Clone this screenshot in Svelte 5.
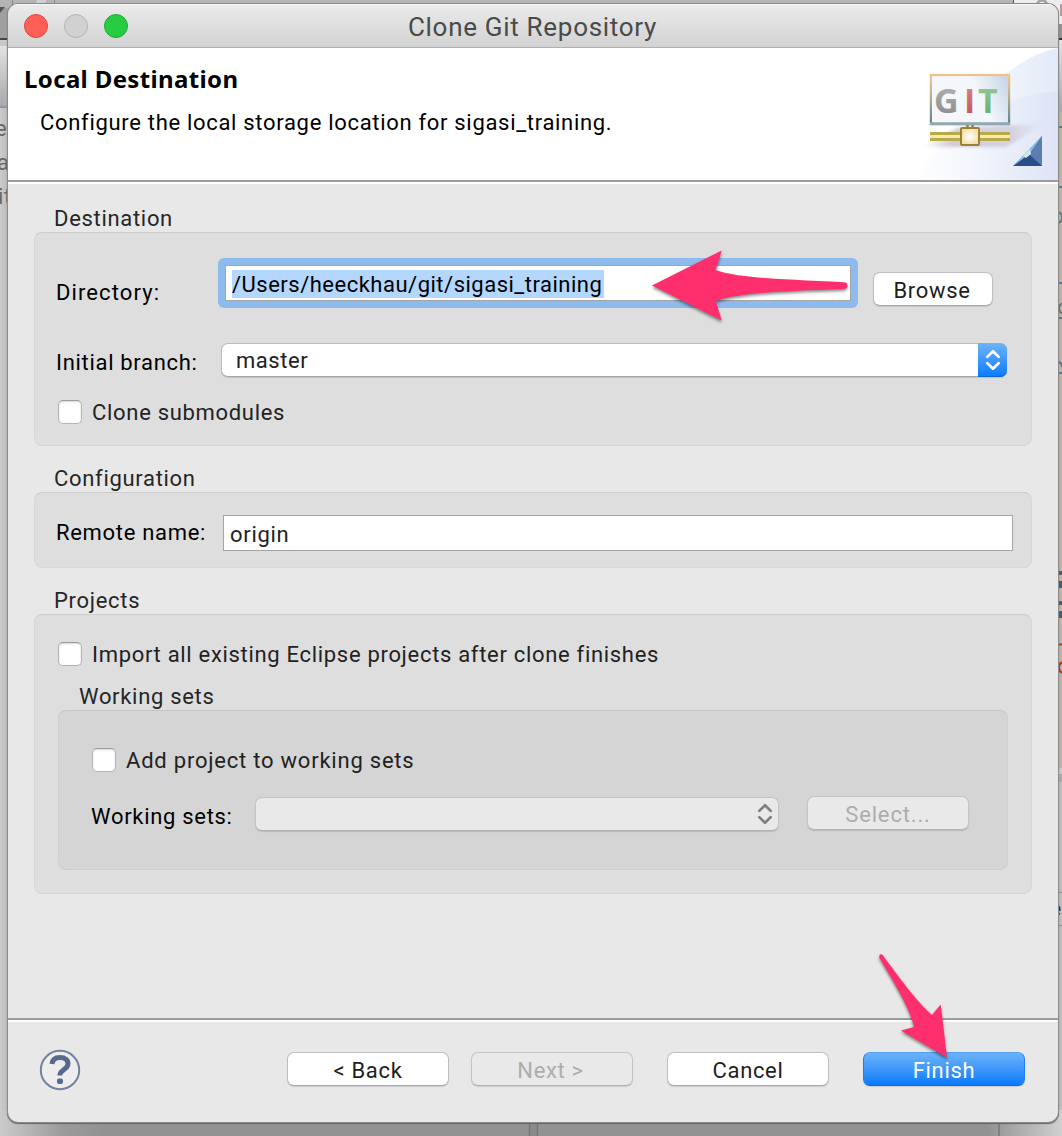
<script>
  let directory = $state('/Users/heeckhau/git/sigasi_training');
  let branch = $state('master');
  let remote = $state('origin');
</script>

{#snippet chevrons()}
  <svg class="chev" viewBox="0 0 16 24" aria-hidden="true">
    <path d="M2.300 8.900 8 3.200l5.700 5.700M2.300 15.100 8 20.800l5.700-5.700" />
  </svg>
{/snippet}

<div class="desktop">
  <!-- Slivers of the editor window behind the dialog -->
  <svg class="backdrop" viewBox="0 0 1062 1136" aria-hidden="true">
    <defs>
      <linearGradient id="bottomShade" x1="0" x2="1" y1="0" y2="0">
        <stop offset="0" stop-color="#cbcbcb" />
        <stop offset=".06" stop-color="#9a9a9a" />
        <stop offset=".1" stop-color="#929292" />
        <stop offset=".93" stop-color="#929292" />
        <stop offset="1" stop-color="#d0d0d0" />
      </linearGradient>
      <linearGradient id="toolbar" x1="0" x2="0" y1="0" y2="1">
        <stop offset="0" stop-color="#e2e2e2" />
        <stop offset="1" stop-color="#a8a8a8" />
      </linearGradient>
      <linearGradient id="leftFade" x1="0" x2="1" y1="0" y2="0">
        <stop offset="0" stop-color="#cbcbcb" />
        <stop offset="1" stop-color="#b4b4b4" />
      </linearGradient>
    </defs>
    <rect width="1062" height="1136" fill="#c4c4c4" />
    <rect width="1014" height="40" fill="#b4b4b4" />
    <rect y="8" width="12" height="31" fill="#a0a0a0" />
    <path d="M0 7h5L0 13z" fill="#555" />
    <path d="M12.500 0v5M54.500 0v5" stroke="#8a8a8a" />
    <path d="M37 0h10l-3 4h-8z" fill="#cfcfcf" />
    <rect y="38" width="12" height="2" fill="#484848" />
    <rect y="40" width="12" height="7" fill="#c8c8c8" />
    <rect y="46" width="12" height="61" fill="url(#toolbar)" />
    <rect y="106" width="12" height="2" fill="#9296ac" />
    <rect y="108" width="12" height="1028" fill="url(#leftFade)" />
    <g class="ghost">
      <text x="-5" y="136">e</text>
      <text x="-3" y="170">a</text>
      <text x="-2" y="204">it</text>
    </g>
    <rect x="1014" width="48" height="24" fill="#ededed" />
    <path d="M1013.500 0v5" stroke="#555" />
    <circle cx="1042" cy="6" r="5.500" fill="none" stroke="#aaa0a4" stroke-width="2.500" />
    <path d="M1061 4v12" stroke="#b09c9c" stroke-width="2" />
    <rect x="1050" y="24" width="12" height="14" fill="#929292" />
    <rect x="1050" y="38" width="12" height="2" fill="#333" />
    <rect x="1050" y="40" width="12" height="72" fill="url(#toolbar)" />
    <rect x="1050" y="112" width="12" height="656" fill="#bdb6a8" />
    <path d="M1056 127h6M1056 187h6" fill="none" stroke="#66767a" stroke-width="2" />
    <path d="M1056 212h2q4 1 4 5.500t-4 5.500M1056 283h6M1064 303q-5 1-5 5.500t5 5.500M1056 318h6M1056 362h3q3 1 3 5M1056 373h6" fill="none" stroke="#66767a" stroke-width="2" />
    <g fill="#4c5c64">
      <rect x="1058" y="571" width="4" height="4" /><rect x="1058" y="581" width="4" height="7" />
      <rect x="1058" y="601" width="4" height="4" /><rect x="1058" y="611" width="4" height="7" />
    </g>
    <path d="M1056 644.500h6M1064 662q-5 0-5 5.500t5 5.500" fill="none" stroke="#b23a18" stroke-width="2" />
    <rect x="1050" y="768" width="12" height="6" fill="#c8c8c8" />
    <rect x="1050" y="774" width="12" height="8" fill="#aaa" />
    <rect x="1050" y="782" width="12" height="354" fill="#bebebe" />
    <path d="M1050 892.500h12M1050 925.500h12" stroke="#8e8e8e" />
    <text x="1049" y="916" class="tail">e</text>
    <rect y="1110" width="1062" height="26" fill="url(#bottomShade)" />
    <rect x="529" y="1120" width="9" height="16" fill="#8a8a8a" />
    <path d="M529.500 1120v16M537.500 1120v16M999 1120v16" stroke="#777" stroke-width="1.500" />
  </svg>

  <section class="window">
    <header class="titlebar">
      <span class="light red"></span><span class="light gray"></span><span class="light green"></span>
      <h1>Clone Git Repository</h1>
    </header>

    <div class="banner">
      <div class="intro">
        <h2>Local Destination</h2>
        <p>Configure the local storage location for sigasi_training.</p>
      </div>
      <svg class="art" viewBox="0 0 150 132" aria-hidden="true">
        <defs>
          <linearGradient id="sky" x1="0" x2="1" y1="0" y2="0">
            <stop offset="0" stop-color="#fff" />
            <stop offset=".5" stop-color="#f5f7fc" />
            <stop offset="1" stop-color="#e3eaf8" />
          </linearGradient>
          <linearGradient id="sky2" x1="0" x2="1" y1="0" y2="0">
            <stop offset="0" stop-color="#fff" />
            <stop offset=".4" stop-color="#f3f6fc" />
            <stop offset="1" stop-color="#dce3f6" />
          </linearGradient>
          <linearGradient id="screen" x1="0" x2="1" y1=".3" y2="0">
            <stop offset="0" stop-color="#f5f7fb" />
            <stop offset=".55" stop-color="#f3f6fa" />
            <stop offset="1" stop-color="#c3d2e6" />
          </linearGradient>
          <linearGradient id="frame" x1="0" x2="0" y1="0" y2="1">
            <stop offset="0" stop-color="#f3c48a" />
            <stop offset=".25" stop-color="#d6bc90" />
            <stop offset="1" stop-color="#5d8589" />
          </linearGradient>
          <linearGradient id="gG" x1="0" x2="0" y1="0" y2="1">
            <stop offset="0" stop-color="#bbb" /><stop offset="1" stop-color="#858585" />
          </linearGradient>
          <linearGradient id="gI" x1="0" x2="0" y1="0" y2="1">
            <stop offset="0" stop-color="#dc9296" /><stop offset="1" stop-color="#c04a50" />
          </linearGradient>
          <linearGradient id="gT" x1="0" x2="0" y1="0" y2="1">
            <stop offset="0" stop-color="#a3cfa2" /><stop offset="1" stop-color="#5caa5c" />
          </linearGradient>
          <radialGradient id="node">
            <stop offset="0" stop-color="#fff" /><stop offset="1" stop-color="#f5dfa8" />
          </radialGradient>
          <linearGradient id="gem" x1="0" x2="1" y1="0" y2="0">
            <stop offset="0" stop-color="#7fa9d0" /><stop offset=".5" stop-color="#8fb9df" /><stop offset="1" stop-color="#5277b0" />
          </linearGradient>
          <linearGradient id="cast" x1="0" x2="1" y1="0" y2="0">
            <stop offset="0" stop-color="#bdb3c6" stop-opacity="0" />
            <stop offset=".25" stop-color="#bdb3c6" stop-opacity=".65" />
            <stop offset=".75" stop-color="#c5bccb" stop-opacity=".55" />
            <stop offset="1" stop-color="#d5cfde" stop-opacity="0" />
          </linearGradient>
          <filter id="soft"><feGaussianBlur stdDeviation="1.500" /></filter>
        </defs>
        <path d="M150 0C105 10 60 50 5 132H150z" fill="url(#sky)" />
        <path d="M150 43C95 46 45 80 5 132H150z" fill="url(#sky2)" opacity=".9" />
        <path d="M14 99 50 80 136 76 98 99z" fill="url(#cast)" filter="url(#soft)" />
        <rect x="22.900" y="27" width="78.200" height="49" fill="url(#screen)" stroke="url(#frame)" stroke-width="2.200" />
        <path d="M22 75.700h80" stroke="#91a9b0" stroke-width="3" />
        <path d="M22 27h80" stroke="#edc18a" stroke-width="2" />
        <g class="git">
          <text x="26" y="64.500" fill="url(#gG)">G</text>
          <text x="56" y="64.500" fill="url(#gI)">I</text>
          <text x="70" y="64.500" fill="url(#gT)">T</text>
        </g>
        <path d="M59.500 77v4M64.500 77v4" stroke="#8c8140" stroke-width="2.500" />
        <path d="M22 88.500h80" stroke="#b9aa48" stroke-width="9" />
        <path d="M22 88.500h80" stroke="#f4ebb0" stroke-width="3" />
        <rect x="53" y="80" width="18" height="17" rx="1" fill="url(#node)" stroke="#9a8134" stroke-width="2" />
        <path d="M134 88v30h-29z" fill="url(#gem)" />
        <path d="M134 88v30l-13-12z" fill="#5b7eb2" />
        <path d="M105 118 121 106l13 12z" fill="#2b4d8c" />
        <path d="M105 118 134 88l-13 18z" fill="#92bce0" />
        <path d="M115 108 122 101l1 5-5 4z" fill="#d5e6e8" />
      </svg>
    </div>

    <main class="content">
      <section class="group">
        <h3>Destination</h3>
        <div class="box first">
          <div class="row dir">
            <span class="label wide">Directory:</span>
            <div class="focus"><div class="field"><mark>{directory}</mark></div></div>
            <button class="btn browse">Browse</button>
          </div>
          <div class="row branch">
            <span class="label wide">Initial branch:</span>
            <div class="combo active"><span>{branch}</span><i class="cap">{@render chevrons()}</i></div>
          </div>
          <div class="row check"><i class="tick"></i><span>Clone submodules</span></div>
        </div>
      </section>

      <section class="group">
        <h3>Configuration</h3>
        <div class="box second">
          <span class="label remote">Remote name:</span>
          <div class="field plain">{remote}</div>
        </div>
      </section>

      <section class="group">
        <h3>Projects</h3>
        <div class="box third">
          <div class="row check"><i class="tick"></i><span>Import all existing Eclipse projects after clone finishes</span></div>
          <h3 class="sub">Working sets</h3>
          <div class="box inner">
            <div class="row check"><i class="tick"></i><span class="mid">Add project to working sets</span></div>
            <div class="row sets">
              <span class="label">Working sets:</span>
              <div class="combo off">{@render chevrons()}</div>
              <button class="btn off select">Select...</button>
            </div>
          </div>
        </div>
      </section>
    </main>

    <footer class="footer">
      <svg class="help" viewBox="0 0 42 42" aria-hidden="true">
        <circle cx="21" cy="21" r="19.200" fill="#ededed" stroke="#71829f" stroke-width="2" />
        <path d="M13 15C13.500 10 17 8.500 21 8.500c5 0 8 2.400 8 6.300 0 5.700-8 5.700-8.200 11.700" fill="none" stroke="#566b8c" stroke-width="5" />
        <rect x="18" y="29.500" width="6" height="5.500" rx="2" fill="#566b8c" />
      </svg>
      <button class="btn foot">&lt; Back</button>
      <button class="btn foot off next">Next &gt;</button>
      <button class="btn foot cancel">Cancel</button>
      <button class="btn foot primary">Finish</button>
    </footer>
  </section>

  <!-- Callout arrows drawn over the dialog -->
  <svg class="callouts" viewBox="0 0 1062 1136" aria-hidden="true">
    <path d="M652 285.500 721.700 250.500 715.700 270C737 278 780 279 844 282.200Q847.500 282.500 847.500 285.500T844 288.900C780 291 737 293 715.700 301L721.700 320.500z" />
    <path d="M883 955.500C898 976 918 1003 932 1015L940.700 1004.500 947 1057.700 901 1030.500 914 1027C910 1008 893 981 879.300 957.500Q879 954 881 954.300T883 955.500z" />
  </svg>
</div>

<style>
  :global(body) { margin: 0; }
  .desktop {
    position: relative; box-sizing: border-box; width: 1062px; height: 1136px; padding: 4px 4px 14px 8px;
    overflow: hidden; font: 22px/28px Roboto, "Liberation Sans", sans-serif; letter-spacing: .69px; color: #222;
  }
  .backdrop, .callouts { position: absolute; left: 0; top: 0; width: 1062px; height: 1136px; }
  .callouts { pointer-events: none; z-index: 3; }
  .callouts path { fill: #ff2f6d; filter: drop-shadow(0 2px 1.5px rgba(0, 0, 0, .45)); }
  .ghost { font-size: 22px; fill: #666; }
  .tail { font-size: 22px; font-weight: 700; fill: #1c2440; }

  .window {
    position: relative; display: flex; flex-direction: column; height: 1118px; border-radius: 10px;
    overflow: hidden; background: #e8e8e8; box-shadow: 0 0 0 1px #8a8a8a, 0 1px 1px 1px #666;
  }
  .titlebar {
    box-sizing: border-box; flex: none; display: flex; align-items: center; gap: 16px; height: 44px;
    padding: 0 16px; border-bottom: 1px solid #b0b0b0; background: linear-gradient(#ebebeb, #d2d2d2);
    box-shadow: inset 0 1px #f6f6f6;
  }
  .light { box-sizing: border-box; flex: none; width: 24px; height: 24px; border-radius: 50%; border: 1px solid; }
  .red { background: #ff5f57; border-color: #e2463f; }
  .gray { background: #d1d1d1; border-color: #b2b2b2; }
  .green { background: #28cc42; border-color: #1dab30; }
  h1, h2, h3, p { margin: 0; font-size: inherit; font-weight: 400; }
  h1 { flex: 1; margin-right: 124px; padding: 2px 0 0 3px; text-align: center; font-size: 26px; letter-spacing: .7px; color: #4a4a4a; }

  .banner { flex: none; display: flex; justify-content: space-between; height: 132px; background: #fff; }
  .intro { padding: 17px 0 0 16px; color: #000; }
  h2 { font: 700 24px/28px "Noto Sans", "Open Sans", sans-serif; letter-spacing: .36px; }
  p { padding: 16px 0 0 16px; }
  .art { width: 150px; height: 132px; }
  .git { font: 700 34px "Open Sans", sans-serif; letter-spacing: 0; }

  .content { flex: 1; border-top: 2px solid #9c9c9c; box-shadow: inset 0 2px #fff; padding: 22px 26px 0; display: flex; flex-direction: column; gap: 18px; }
  h3 { height: 28px; padding-left: 20px; line-height: 30px; color: #262626; }
  .box {
    box-sizing: border-box; border-radius: 8px; background: #dedede;
    border: 1px solid #d7d7d7; border-top-color: #cdcdcd;
  }
  .row { display: flex; }
  .label { flex: none; color: #000; }
  .wide { width: 165px; }

  .first { height: 214px; padding: 25px 0 0 21px; }
  .dir { height: 50px; }
  .dir .label { width: 162px; margin-top: 21px; letter-spacing: 1.1px; }
  .focus { box-sizing: border-box; width: 640px; height: 50px; padding: 7px; border-radius: 6px; background: #8dbbee; }
  .field { box-sizing: border-box; height: 36px; padding: 4px 0 0 6px; border: 1px solid #a5a5a5; background: #fff; color: #000; }
  mark { display: inline-block; height: 28px; line-height: 29px; width: 372px; background: #b3d7ff; color: #000; white-space: nowrap; letter-spacing: .5px; }
  .btn {
    box-sizing: border-box; flex: none; height: 34px; border: 1px solid #bfbfbf; border-bottom-color: #a8a8a8;
    border-radius: 7px; background: #fff; color: #1e1e1e; font: inherit; line-height: 29px; letter-spacing: .65px;
    box-shadow: 0 1px 1px rgba(0, 0, 0, .12); text-align: center; padding: 3px 0 0;
  }
  .browse { width: 120px; margin: 14px 0 0 15px; padding-right: 2px; }
  .branch { margin-top: 35px; height: 34px; }
  .branch .label { padding-top: 6px; }
  .combo {
    position: relative; box-sizing: border-box; display: flex; justify-content: space-between; height: 34px;
    border: 1px solid #bdbdbd; border-bottom-color: #a6a6a6; border-radius: 7px; background: #fff;
    box-shadow: 0 1px 1px rgba(0, 0, 0, .12); line-height: 33px;
  }
  .active { width: 786px; padding-left: 14px; letter-spacing: .55px; }
  .cap {
    box-sizing: border-box; display: flex; align-items: center; justify-content: center; width: 29px; margin: -1px;
    border-radius: 0 7px 7px 0; background: linear-gradient(#6cb3fa, #3f97fb 50%, #0a7bff); box-shadow: inset 0 -1px #0a68e8;
  }
  .chev { width: 16px; height: 24px; fill: none; stroke: #fff; stroke-width: 2.7; stroke-linecap: round; stroke-linejoin: round; }
  .check { height: 24px; align-items: center; gap: 10px; }
  .check span { padding-top: 2px; }
  .first .check { margin: 23px 0 0 2px; }
  .tick {
    box-sizing: border-box; width: 24px; height: 24px; border-radius: 5px; border: 1px solid #b4b4b4; border-top-color: #9c9c9c;
    background: #fff; box-shadow: inset 0 1px 2px rgba(0, 0, 0, .16);
  }

  .second { display: flex; height: 76px; padding: 22px 18px 0 21px; }
  .remote { width: 167px; padding-top: 4px; }
  .plain { flex: 1; padding-top: 5px; color: #222; }

  .third { height: 280px; padding: 27px 23px 0; }
  .sub { margin: 16px 0 0; height: 28px; padding-left: 21px; }
  .inner { height: 160px; padding: 37px 0 0 32px; background: #d5d5d5; border-color: #cfcfcf; border-top-color: #c5c5c5; border-radius: 8px; }
  .inner .check { margin-left: 1px; }
  .mid { letter-spacing: .78px; }
  .sets { margin: 24px 0 0 -1px; height: 35px; }
  .sets .label { box-sizing: border-box; width: 165px; padding: 7px 0 0 1px; letter-spacing: .7px; }
  .sets .combo { width: 524px; margin-top: 1px; align-items: center; justify-content: flex-end; padding-right: 5px; }
  .off { background: #e9e9e9; border-color: #c4c4c4; border-bottom-color: #b2b2b2; color: #adadad; }
  .off .chev { stroke: #7f7f7f; }
  .select { width: 162px; margin-left: 28px; letter-spacing: .85px; }

  .footer {
    box-sizing: border-box; flex: none; display: flex; height: 104px; padding: 34px 33px 0 31px;
    border-top: 2px solid #9c9c9c; box-shadow: inset 0 2px #fff;
  }
  .help { width: 42px; height: 42px; margin: -5px 206px 0 0; }
  .foot { width: 162px; margin-top: -2px; }
  .next { margin-left: 22px; padding-right: 3px; }
  .cancel, .primary { margin-left: 34px; }
  .primary { color: #fff; border-color: #4f9ff5 #1f7ff0 #0a68e8; background: linear-gradient(#6cb3fa, #3f97fb 50%, #0a7bff); }
</style>
